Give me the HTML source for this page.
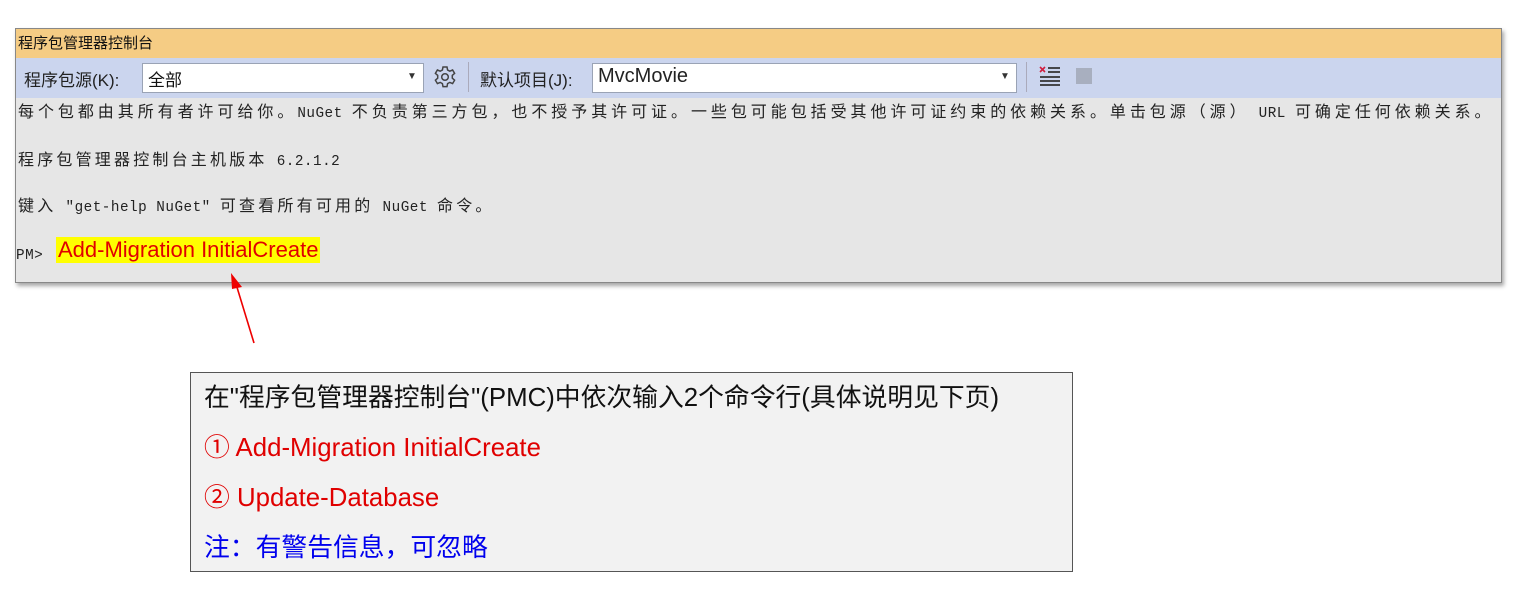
<!DOCTYPE html>
<html><head><meta charset="utf-8"><style>
body{margin:0;width:1535px;height:592px;background:#fff;position:relative;overflow:hidden;font-family:"Liberation Sans","Noto Sans CJK SC",sans-serif}
.a{position:absolute;white-space:nowrap}
#panel{position:absolute;left:15px;top:28px;width:1485px;height:253px;background:#e6e6e6;border:1px solid #888;box-shadow:2px 3px 4px rgba(0,0,0,.35)}
#title{position:absolute;left:0;top:0;width:1485px;height:29px;background:#f5cc84}
#tb{position:absolute;left:0;top:29px;width:1485px;height:40px;background:#cbd5ee}
.combo{position:absolute;background:#fff;border:1px solid #9aa3b5;height:28px}
.mono{font-family:"Noto Sans CJK SC",monospace;font-size:16px;color:#222;letter-spacing:3.2px}
.mono i{font-style:normal;font-family:"Liberation Mono",monospace;font-size:14.3px;letter-spacing:0.5px}
.big{font-size:25.8px;line-height:30px}
</style></head><body>
<div id="panel">
<div id="title"></div><div id="tb"></div>
</div>
<div class="a" style="left:18px;top:32px;font-size:15px;color:#111">程序包管理器控制台</div>
<div class="a" style="left:24px;top:66px;font-size:17px;color:#222">程序包源(K):</div>
<div class="combo" style="left:142px;top:63px;width:280px"></div>
<div class="a" style="left:148px;top:66px;font-size:17px;color:#111">全部</div>
<div class="a" style="left:407px;top:71px;font-size:10px;color:#333">▼</div>
<svg class="a" style="left:433px;top:65px" width="24" height="24" viewBox="0 0 24 24"><path d="M10 2h4l.6 3 2.2 1.2 2.8-1.2 2 3.4-2.3 2v2.8l2.3 2-2 3.4-2.8-1.2-2.2 1.2-.6 3h-4l-.6-3-2.2-1.2-2.8 1.2-2-3.4 2.3-2v-2.8l-2.3-2 2-3.4 2.8 1.2L9.4 5z" fill="none" stroke="#444" stroke-width="1.5"/><circle cx="12" cy="12" r="3.3" fill="none" stroke="#444" stroke-width="1.5"/></svg>
<div class="a" style="left:468px;top:62px;width:1px;height:30px;background:#aab"></div>
<div class="a" style="left:480px;top:66px;font-size:17px;color:#222">默认项目(J):</div>
<div class="combo" style="left:592px;top:63px;width:423px"></div>
<div class="a" style="left:598px;top:65px;font-size:20px;color:#222">MvcMovie</div>
<div class="a" style="left:1000px;top:71px;font-size:10px;color:#333">▼</div>
<div class="a" style="left:1026px;top:62px;width:1px;height:30px;background:#aab"></div>
<svg class="a" style="left:1038px;top:64px" width="26" height="26"><path d="M2 3l5 5M7 3l-5 5" stroke="#d02040" stroke-width="1.6"/><path d="M10 4h12M10 8h12M2 13h20M2 17h20M2 21h20" stroke="#333" stroke-width="1.8"/></svg>
<div class="a" style="left:1076px;top:68px;width:16px;height:16px;background:#a8afbf"></div>
<div class="a mono" style="left:18px;top:98px;letter-spacing:3.95px">每个包都由其所有者许可给你。<i>NuGet </i>不负责第三方包，也不授予其许可证。一些包可能包括受其他许可证约束的依赖关系。单击包源（源）<i> URL </i>可确定任何依赖关系。</div>
<div class="a mono" style="left:18px;top:146px">程序包管理器控制台主机版本<i> 6.2.1.2</i></div>
<div class="a mono" style="left:18px;top:192px">键入<i> "get-help NuGet" </i>可查看所有可用的<i> NuGet </i>命令。</div>
<div class="a mono" style="left:16px;top:240px"><i>PM&gt;</i></div>
<div class="a" style="left:56px;top:237px;background:#ffff00;color:#e00000;font-size:22px;padding:0 2px;line-height:26px">Add-Migration InitialCreate</div>
<svg class="a" style="left:220px;top:270px" width="50" height="80"><path d="M34 73L16 14" stroke="#e00" stroke-width="1.6"/><path d="M11 3L22 17L12 19Z" fill="#e00"/></svg>
<div class="a" style="left:190px;top:372px;width:881px;height:198px;background:#f2f2f2;border:1px solid #555"></div>
<div class="a big" style="left:204px;top:383px;color:#111">在"程序包管理器控制台"(PMC)中依次输入2个命令行(具体说明见下页)</div>
<div class="a big" style="left:204px;top:433px;color:#e00000">① Add-Migration InitialCreate</div>
<div class="a big" style="left:204px;top:483px;color:#e00000">② Update-Database</div>
<div class="a big" style="left:204px;top:533px;color:#0000ee">注：有警告信息，可忽略</div>
</body></html>
